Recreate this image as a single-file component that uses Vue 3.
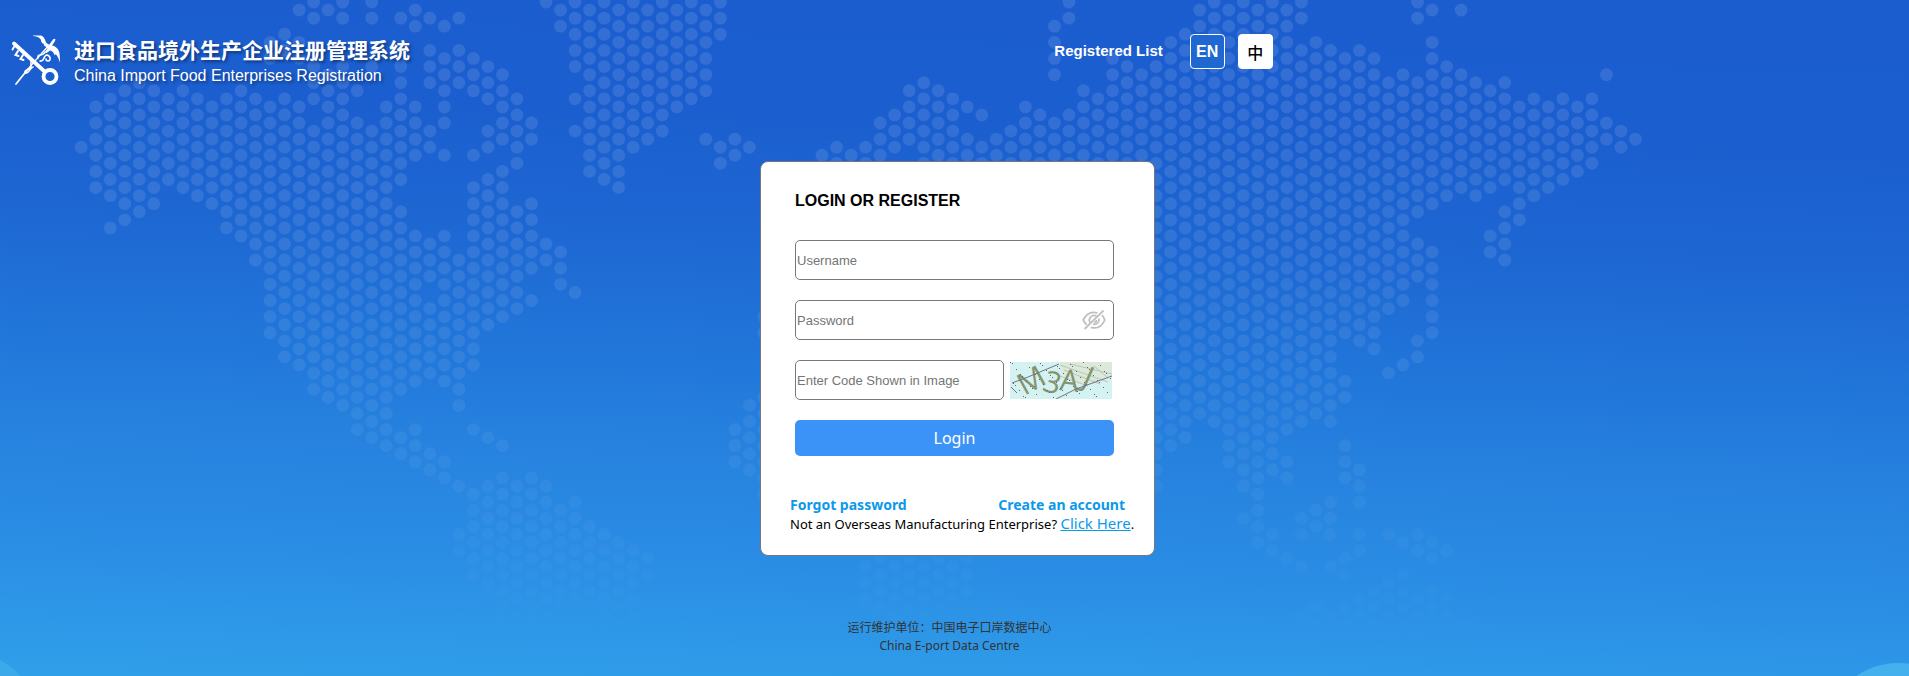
<script setup>
import { ref } from 'vue'

const username = ref('')
const password = ref('')
const code = ref('')
const showPassword = ref(false)

// World map dots: for each column, runs of half-rows "first-last" (every second one is filled).
const columns = {
  0: '18', 1: '13-23', 2: '12-24 28', 3: '11-27', 4: '10-26', 5: '11-25', 6: '12-22', 7: '11-23', 8: '12-24', 9: '13-25',
  10: '12-28', 11: '11-29', 12: '12-32', 13: '5-7 13-41', 14: '4-6 12-44', 15: '1 5-7 13-45', 16: '0-2 8-12 16-48',
  17: '1 9-49', 18: '0-2 8-50', 19: '11 15-53', 20: '0-2 8 16-54', 21: '13-55', 22: '2 8-22 26-48 54-56',
  23: '1-3 13-19 29-47 53-57', 24: '2 6-10 16-18 30-34 38-46 56-58', 25: '3 7-15 19 29-47 57-59',
  26: '2 6-10 32-50 60 66-68', 27: '7-11 19 23-45 53 61-71', 28: '8-12 16-18 22-40 54 60-72', 29: '9-17 21-39 55 59-79',
  30: '12-20 26-38 60-80', 31: '15-17 25-33 37 59-81', 32: '0 30-32 60-80', 33: '1-3 31-35 63-81', 34: '0-8 12 16 36 62-80',
  35: '1-21 65-79', 36: '0-22 66-78', 37: '1-23 67-79', 38: '0-18 68-76', 39: '1-17 69-71', 40: '0-16', 41: '1-13',
  42: '0-12', 43: '1-11 17', 44: '0-4 18-20', 45: '17-19 53-57', 46: '18 50-58', 47: '39-41 49-61',
  51: '19', 52: '18-20', 53: '19', 54: '18-20 70-74', 55: '15-19 69-75', 56: '14-18 70-76', 57: '11-17 69-75', 58: '10-20 70-76',
  59: '11-19 69-75', 60: '12-20 70-74', 61: '13 17-19 69-73', 62: '14 18-20', 63: '17-19', 64: '16-20', 65: '13-19', 66: '14-20',
  67: '3-9 15-19', 68: '0-2 14-20', 69: '11-19', 70: '12-20', 71: '7-19', 72: '8-20', 73: '9-19', 74: '8-60', 75: '5-55',
  76: '4-54', 77: '1-51', 78: '0-52', 79: '1-57', 80: '0-60 64', 81: '1-67', 82: '0-58 66-68', 83: '1-53 57-59 69',
  84: '0-2 6-52 64-66 70 76-82', 85: '5-51 63-65 75-81', 86: '6-52 62-66 70 76-82', 87: '7-41 47-49 55-59 69-71 75-81',
  88: '6-42 58-62 66-68 74-82', 89: '7-43 73-81', 90: '10-38 46 66 72-82', 91: '9-37 45 67 71-81', 92: '0-2 10-26 30-34 42-44 66-68 74-82',
  93: '1 5-25 31-41 67-69 73-81', 94: '8-24 68 74-82', 95: '1 9-23 77-81', 96: '10-24', 97: '11-23 29-31', 98: '10-22 26-32',
  99: '13-27', 100: '12-24', 101: '13-23', 102: '12-22', 103: '13-21', 104: '12-20', 105: '9 15-17', 106: '16-18', 107: '17'
}

const dots = []
for (const [col, runs] of Object.entries(columns)) {
  for (const run of runs.split(' ')) {
    const [first, last = first] = run.split('-').map(Number)
    for (let row = first; row <= last; row += 2) {
      dots.push({ x: 81.2 + 14.526 * col, y: 2 + 8.067 * row })
    }
  }
}

// Specks of noise over the verification image.
const specks = Array.from({ length: 60 }, (_, i) => ({ x: (i * 37) % 101, y: (i * 23 + (i % 7) * 5) % 36 }))
</script>

<template>
  <div class="page">
    <svg class="map" viewBox="0 0 1909 676" preserveAspectRatio="xMidYMin slice" aria-hidden="true">
      <defs>
        <linearGradient id="dot-fade" gradientUnits="userSpaceOnUse" x1="0" y1="0" x2="0" y2="676">
          <stop offset="0" stop-color="#fff" stop-opacity=".11" />
          <stop offset=".3" stop-color="#fff" stop-opacity=".1" />
          <stop offset=".55" stop-color="#fff" stop-opacity=".07" />
          <stop offset=".8" stop-color="#fff" stop-opacity=".03" />
          <stop offset=".95" stop-color="#fff" stop-opacity="0" />
        </linearGradient>
      </defs>
      <g fill="url(#dot-fade)">
        <path
          v-for="(d, i) in dots"
          :key="i"
          :d="`M${d.x - 6.4} ${d.y}a6.4 6.4 0 1 0 12.8 0a6.4 6.4 0 1 0 -12.8 0`"
        />
      </g>
      <circle cx="1898" cy="737" r="74" fill="#45b0ee" />
      <circle cx="-30" cy="720" r="67" fill="#3ba9ea" />
    </svg>

    <header class="header">
      <div class="brand">
        <svg class="logo" viewBox="0 0 50 52" fill="none" stroke="#fff" stroke-linecap="round" aria-hidden="true">
          <path d="M3 8.500L33 36" stroke-width="3.800" />
          <path d="M3 12l-1.500 2.500M7 16l-2.500 4 3 1M12 20l-2.500 4 3 1" stroke-width="2" />
          <circle cx="39" cy="41.500" r="6.500" stroke-width="3.800" />
          <path d="M5 49L17 34" stroke-width="1.800" />
          <path d="M17 34L38 10" stroke-width="1.200" />
          <path d="M14 38c-1-5 6-2 6-7s-1-5 3-5M14 38c5 1 4-5 8-6M27 23c-1-5 5-1 7-6M29 26c5 1 3-6 7-6 4 1 4 6 1 6-2 0-2-1-2-2" stroke-width="1.600" />
          <path d="M22 .5h8c3 1 4 4 5 7l3 2.500 4-5.500c2-1.500 3-.5 2 1.500l-3 4.500c4 .5 7 4 7.500 8 .5 4 .5 6 .5 9-1.500-4-2.500-7-4.500-8.500 0 1-.500 1.500-1 1-1-3-2.500-4-4.500-4.500l-4 3-1-2 2.500-3-2.500-2.500c-1 0-1.500-1-1-2-2-.5-3-2-3-4-1-2-3-3.500-8-4z" fill="#fff" stroke="none" />
        </svg>
        <div class="names">
          <h1 class="name-zh">进口食品境外生产企业注册管理系统</h1>
          <p class="name-en">China Import Food Enterprises Registration</p>
        </div>
      </div>
      <nav class="nav">
        <a class="list-link" href="#">Registered List</a>
        <button class="lang" type="button">EN</button>
        <button class="lang lang-zh" type="button">中</button>
      </nav>
    </header>

    <main class="card">
      <h2 class="card-title">LOGIN OR REGISTER</h2>
      <form class="form" @submit.prevent>
        <input v-model="username" class="field" type="text" placeholder="Username" aria-label="Username" />
        <div class="password">
          <input
            v-model="password"
            class="field"
            :type="showPassword ? 'text' : 'password'"
            placeholder="Password"
            aria-label="Password"
          />
          <button class="eye" type="button" aria-label="Show password" @click="showPassword = !showPassword">
            <svg viewBox="0 0 24 20" fill="none" stroke="#bfbfbf" stroke-width="1.800" aria-hidden="true">
              <path d="M15.500 3C8 .8 4 4.500 1.200 10c1 2 2 3.500 3.500 4.800M20 5c1.200 1.300 2 2.800 2.800 5-3.200 7-8.500 9-14 7.300" />
              <path d="M14.500 5.800C9.500 4 6 8.500 8 12.500M17 8.500c.6 4-2.500 6.500-6 5.700" />
              <path d="M14.500 10c0 1.500-1 2.500-2.500 2.500" stroke-width="1.500" />
              <path d="M2.500 19L21.500.5" />
            </svg>
          </button>
        </div>
        <div class="code-row">
          <input
            v-model="code"
            class="field"
            type="text"
            placeholder="Enter Code Shown in Image"
            aria-label="Enter Code Shown in Image"
          />
          <svg class="captcha" viewBox="0 0 102 37" role="img" aria-label="Verification code">
            <rect width="102" height="37" fill="#d3f2f1" />
            <path d="M50 0L102 0V15L74 24L52 12z" fill="#dae9dc" />
            <g stroke="#bcc8b4" stroke-width="1" fill="none">
              <path d="M50 3L98 20M54 8L90 22M60 2L102 12M50 14L78 24M84 4L98 16" />
            </g>
            <g fill="#84946f" class="captcha-text">
              <text x="14" y="32" transform="rotate(-29 18 32)">M</text>
              <text x="34" y="31" transform="rotate(16 42 20)">3</text>
              <text x="50" y="29" transform="rotate(6 60 20)">A</text>
              <text x="73" y="25" transform="rotate(24 76 18)">J</text>
            </g>
            <path d="M2 21L18 15L49 2M46 37L66 27L102 14M1 25l6 6" stroke="#6d7785" stroke-width="1" fill="none" />
            <rect v-for="(s, i) in specks" :key="i" :x="s.x" :y="s.y" width="1" height="1" fill="#66627c" />
          </svg>
        </div>
        <button class="login" type="submit">Login</button>
      </form>
      <div class="links">
        <a href="#">Forgot password</a>
        <a href="#">Create an account</a>
      </div>
      <p class="note">Not an Overseas Manufacturing Enterprise? <a href="#">Click Here</a>.</p>
    </main>

    <footer class="footer">
      <p>运行维护单位：中国电子口岸数据中心</p>
      <p>China E-port Data Centre</p>
    </footer>
  </div>
</template>

<style>
body {
  margin: 0;
}
</style>

<style scoped>
.page {
  position: relative;
  display: flex;
  flex-direction: column;
  box-sizing: border-box;
  min-height: 100vh;
  overflow: hidden;
  font-family: "Liberation Sans", Arial, "Noto Sans CJK SC", sans-serif;
  background: linear-gradient(182deg, #1b5dcf 0%, #1b5ecf 20%, #1e68d3 38%, #2175d9 52%, #2681de 65%, #2a8ce4 80%, #2e99e8 93%, #309fe9 100%);
}
.map {
  position: absolute;
  inset: 0;
  width: 100%;
  height: 100%;
}
h1,
h2,
p {
  margin: 0;
}
.header {
  position: relative;
  display: flex;
  justify-content: space-between;
  align-items: flex-start;
  padding: 34px 33.33% 0 11px;
}
.brand {
  display: flex;
  gap: 13px;
  padding-top: 1px;
}
.logo {
  width: 50px;
  height: 52px;
}
.names {
  color: #fff;
  text-shadow: 2px 2px 3px rgba(0, 0, 0, 0.4);
}
.name-zh {
  font-size: 21px;
  line-height: 32px;
}
.name-en {
  font-size: 16px;
  line-height: 18px;
}
.nav {
  display: flex;
  align-items: flex-start;
}
.list-link {
  margin-right: 27px;
  color: #fff;
  font-size: 15px;
  font-weight: bold;
  line-height: 33px;
  text-decoration: none;
}
.lang {
  width: 35px;
  height: 35px;
  padding: 0;
  border: 1px solid #fff;
  border-radius: 4px;
  background: #1f68d2;
  color: #fff;
  font: bold 16px "Liberation Sans", Arial, "Noto Sans CJK SC", sans-serif;
}
.lang-zh {
  margin-left: 13px;
  background: #fff;
  color: #000;
  font-weight: 500;
}
.card {
  position: relative;
  align-self: center;
  box-sizing: border-box;
  width: 395px;
  margin: 74px 0 0 6px;
  padding: 29px 0 22px;
  border: 1px solid #777;
  border-radius: 8px;
  background: #fff;
}
.card-title {
  padding-left: 34px;
  font-size: 16px;
  line-height: 20px;
}
.form {
  display: flex;
  flex-direction: column;
  gap: 20px;
  margin: 29px 40px 0 34px;
}
.field {
  box-sizing: border-box;
  width: 100%;
  height: 40px;
  padding: 1px;
  border: 1px solid #777;
  border-radius: 5px;
  background: #fff;
  font: 13px "Liberation Sans", Arial, sans-serif;
}
.field::placeholder {
  color: #757575;
}
.password {
  position: relative;
}
.eye {
  position: absolute;
  top: 10px;
  right: 8px;
  width: 24px;
  height: 20px;
  padding: 0;
  border: 0;
  background: none;
}
.eye svg {
  display: block;
}
.code-row {
  display: flex;
  align-items: center;
  gap: 6px;
}
.code-row .field {
  flex: 1;
  min-width: 0;
}
.captcha {
  width: 102px;
  height: 37px;
  margin-right: 2px;
}
.captcha-text {
  font: 30px "Open Sans", sans-serif;
}
.login {
  height: 36px;
  padding: 0;
  border: 0;
  border-radius: 5px;
  background: #3c93f7;
  color: #fff;
  font: 16px "Noto Sans", sans-serif;
}
.links {
  display: flex;
  justify-content: space-between;
  margin: 40px 29px 0;
  font: bold 14px/18px "Noto Sans", sans-serif;
}
.links a {
  color: #0d99ea;
  text-decoration: none;
}
.note {
  margin-left: 29px;
  font: 13px/18px "Noto Sans", sans-serif;
  white-space: nowrap;
}
.note a {
  color: #0d99ea;
  font-size: 15px;
}
.footer {
  position: relative;
  margin: 63px 10px 0 0;
  color: #333;
  text-align: center;
  font: 12px/18px "Noto Sans", "Noto Sans CJK SC", sans-serif;
}
</style>
